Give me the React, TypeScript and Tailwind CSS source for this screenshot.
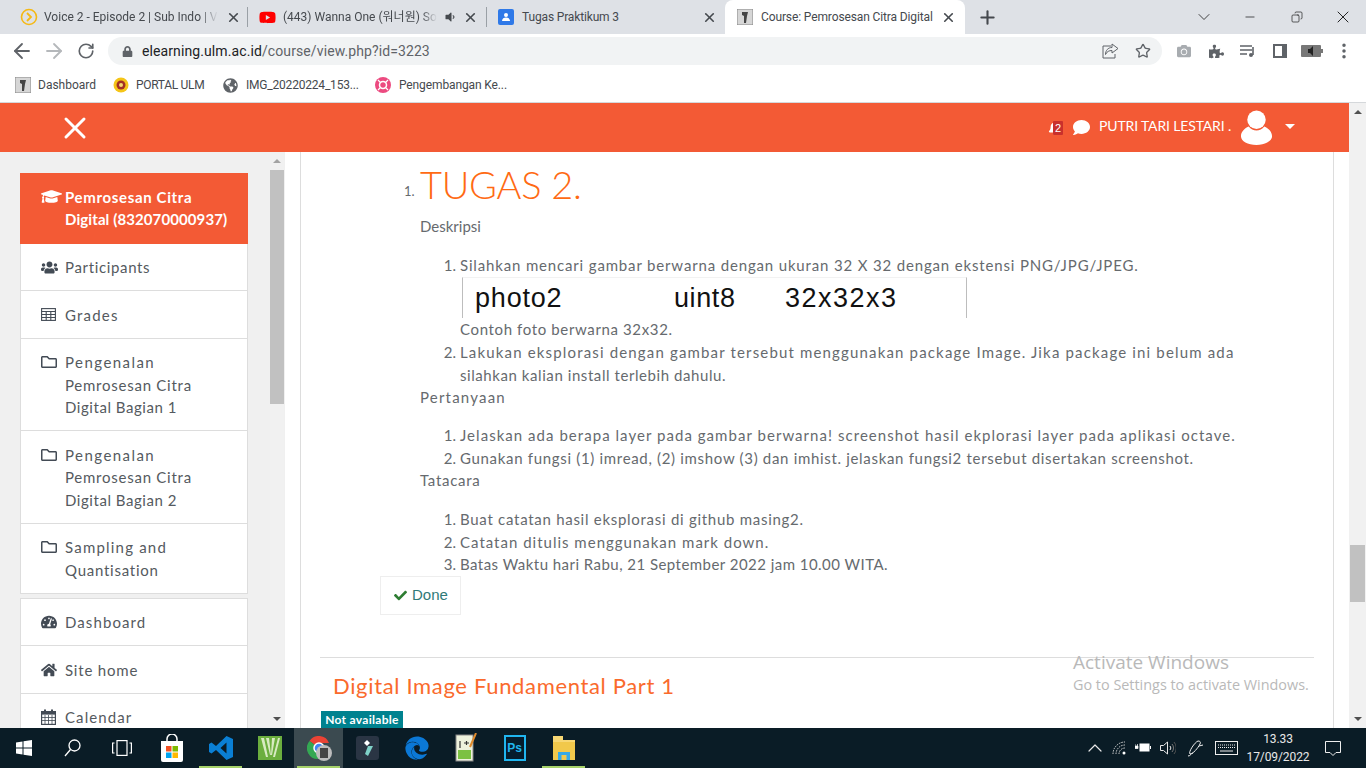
import React from "react";
import { ArrowLeft, ArrowRight, RotateCw, X, Plus, Minus, ChevronDown, Star, ChevronUp, MoreVertical, Copy } from "lucide-react";
import { FaGraduationCap, FaUsers, FaRegFolder, FaTachometerAlt, FaHome, FaBell, FaComment, FaCheck, FaYoutube, FaGlobeAmericas, FaLock, FaVolumeDown, FaPuzzlePiece, FaCamera, FaEdge } from "react-icons/fa";

const Favicon = () => (
  <svg width="16" height="16" viewBox="0 0 16 16" className="shrink-0"><rect width="16" height="16" fill="#d6d6d6" /><path d="M0 0h16v16H0z" fill="none" stroke="#888" /><path d="M5 3h6l-1 4-1 7H7V7L5 6z" fill="#444" /></svg>
);

const Close = () => <X size={15} strokeWidth={2.600} className="text-[#45494e] shrink-0 ml-auto -mx-[1px]" />;

const TableIcon = () => (
  <svg width="15" height="13" viewBox="0 0 15 13" fill="none" stroke="#434b55" strokeWidth="1.100"><rect x="0.600" y="0.600" width="13.800" height="11.800" /><path d="M0.600 3.500h13.800M0.600 6.500h13.800M0.600 9.500h13.800M5.200 3.500v9M9.800 3.500v9" /></svg>
);

const CalendarIcon = () => (
  <svg width="15" height="16" viewBox="0 0 15 16"><rect x="0.600" y="2.600" width="13.800" height="12.800" fill="none" stroke="#434b55" strokeWidth="1.200" /><rect x="0.600" y="2.600" width="13.800" height="3" fill="#434b55" /><path d="M0.600 8.500h13.800M0.600 11.500h13.800M4 6v9M7.500 6v9M11 6v9" stroke="#434b55" strokeWidth="0.800" /><path d="M4 0.500v3M11 0.500v3" stroke="#434b55" strokeWidth="2" /></svg>
);

const L = ({ t, children }: { t: string; children: React.ReactNode }) => <span className={`block ${t}`}>{children}</span>;

const Item = ({ icon, children }: { icon: React.ReactNode; children: React.ReactNode }) => (
  <div className="flex pl-[20px] pt-[12.500px] pb-[11.500px] border-b border-[#dddddd]">
    <span className="w-[24px] h-[22px] flex items-center text-[#434b55] shrink-0">{icon}</span>
    <span className="leading-[22.500px] text-[15px] text-[#555a60] whitespace-nowrap">{children}</span>
  </div>
);

const Body = ({ children, className = "" }: { children: React.ReactNode; className?: string }) => (
  <div className={`leading-[22.500px] h-[22.500px] whitespace-nowrap ${className}`}>{children}</div>
);

const Li = ({ n, children, className = "" }: { n: number; children: React.ReactNode; className?: string }) => (
  <div className={`flex ${className}`}>
    <span className="w-[40px] text-right pr-[4px] shrink-0 tracking-normal leading-[22.500px]">{n}.</span>
    <div className="whitespace-nowrap leading-[22.500px]">{children}</div>
  </div>
);

const TaskIcon = ({ children, active, lit }: { children: React.ReactNode; active?: boolean; lit?: boolean }) => (
  <div className={`w-[49px] h-full relative flex items-center justify-center ${active ? "bg-[#3b4a50]" : ""}`}>
    {children}
    {lit ? <span className="absolute bottom-0 left-[3px] right-[3px] h-[2px] bg-[#a6d26a]" /> : null}
  </div>
);

const Tool = ({ children }: { children: React.ReactNode }) => (
  <div className="w-[32px] h-full flex items-center justify-center shrink-0">{children}</div>
);

export default function App() {
  return (
    <div className="w-[1366px] h-[768px] overflow-hidden flex flex-col bg-white [font-family:Lato,'Noto_Sans_CJK_KR',sans-serif]">
      {/* Tab strip */}
      <div className="h-[34px] bg-[#dee1e6] flex items-center shrink-0 pl-[20px] [font-family:Roboto,'Noto_Sans_CJK_KR',sans-serif]">
        <div className="flex items-center h-full w-[220px]">
          <svg width="18" height="18" viewBox="0 0 18 18" className="shrink-0"><circle cx="9" cy="9" r="7.500" fill="none" stroke="#f5b915" strokeWidth="1.600" /><path d="M7 5l4 4-4 4" fill="none" stroke="#f5b915" strokeWidth="1.800" /></svg>
          <span className="ml-[6px] w-[174px] overflow-hidden whitespace-nowrap text-[12px] text-[#45494e] [mask-image:linear-gradient(to_right,black_90%,transparent)]">Voice 2 - Episode 2 | Sub Indo | V</span>
          <Close />
        </div>
        <span className="w-px h-[20px] bg-[#9aa0a6] ml-[7px] mr-[11px]" />
        <div className="flex items-center h-full w-[218px]">
          <FaYoutube size={17} className="text-[#ff0000] shrink-0" />
          <span className="ml-[7px] w-[154px] overflow-hidden whitespace-nowrap text-[12px] text-[#45494e] [mask-image:linear-gradient(to_right,black_90%,transparent)]">(443) Wanna One (워너원) So</span>
          <FaVolumeDown size={12} className="text-[#45494e] ml-[7px]" />
          <Close />
        </div>
        <span className="w-px h-[20px] bg-[#9aa0a6] ml-[9px] mr-[11px]" />
        <div className="flex items-center h-full w-[218px]">
          <svg width="16" height="16" viewBox="0 0 16 16" className="shrink-0"><rect width="16" height="16" rx="2" fill="#2f79e8" /><circle cx="8" cy="6" r="2" fill="#fff" /><path d="M4 12c0-2.500 2-3.500 4-3.500s4 1 4 3.500z" fill="#fff" /></svg>
          <span className="ml-[8px] whitespace-nowrap text-[12px] text-[#45494e] tracking-[-0.15px]">Tugas Praktikum 3</span>
          <Close />
        </div>
        <div className="ml-[9px] w-[240px] h-full bg-white rounded-t-[8px] flex items-center pl-[12px] pr-[10px] self-end">
          <Favicon />
          <span className="ml-[8px] whitespace-nowrap text-[12px] text-[#45494e] tracking-[-0.12px]">Course: Pemrosesan Citra Digital</span>
          <Close />
        </div>
        <Plus size={21} strokeWidth={2.400} className="text-[#45494e] ml-[12px]" />
        <div className="ml-auto flex items-center h-full">
          <ChevronDown size={20} strokeWidth={1.100} className="text-[#333] mr-[29px]" />
          <Minus size={14} strokeWidth={1.200} className="text-[#111] mr-[34px]" />
          <Copy size={12} strokeWidth={1.300} className="text-[#111] mr-[30px] -scale-x-100" />
          <X size={20} strokeWidth={1.100} className="text-[#111] mr-[13px]" />
        </div>
      </div>
      {/* Toolbar */}
      <div className="h-[34px] bg-white flex items-center shrink-0 pl-[6px]">
        <Tool><ArrowLeft size={24} strokeWidth={1.800} className="text-[#5f6368]" /></Tool>
        <Tool><ArrowRight size={24} strokeWidth={1.800} className="text-[#b5b8bb]" /></Tool>
        <Tool><RotateCw size={18} strokeWidth={2.200} className="text-[#5f6368]" /></Tool>
        <div className="ml-[6px] w-[1054px] h-[28px] rounded-full bg-[#f1f3f4] flex items-center pl-[14px] pr-[10px] shrink-0">
          <FaLock size={11} className="text-[#5f6368]" />
          <span className="ml-[9px] pt-[1px] text-[14px] text-[#202124] [font-family:Roboto,sans-serif] tracking-[0.1px]">elearning.ulm.ac.id<span className="text-[#5f6368]">/course/view.php?id=3223</span></span>
          <svg width="17" height="16" viewBox="0 0 17 16" fill="none" stroke="#5f6368" strokeWidth="1" className="ml-auto mr-[16px]"><path d="M9 3H1v12h12v-4" /><path d="M10 1l6 4.500-6 4.500V7.500c-3 0-5 1-6.500 4 0-4 2.500-7 6.500-7z" /></svg>
          <Star size={16} strokeWidth={2} className="text-[#5f6368] mr-[1px]" />
        </div>
        <div className="ml-[6px] flex h-full">
          <Tool><FaCamera size={14} className="text-[#a8acb0]" /></Tool>
          <Tool><FaPuzzlePiece size={15} className="text-[#5f6368]" /></Tool>
          <Tool><svg width="16" height="14" viewBox="0 0 16 14"><path d="M0 2h12M0 6h12M0 10h7" stroke="#5f6368" strokeWidth="1.500" /><path d="M13 3v8" stroke="#5f6368" strokeWidth="1.600" /><circle cx="11" cy="11" r="2" fill="#5f6368" /></svg></Tool>
          <Tool><svg width="14" height="14" viewBox="0 0 14 14"><path d="M0 0h14v14H0z" fill="#5f6368" /><path d="M2 2h7v10H2z" fill="#fff" /></svg></Tool>
          <Tool><svg width="22" height="12" viewBox="0 0 22 12"><rect width="20" height="12" rx="1" fill="#777" /><path d="M7 4h2l3-3v10L9 8H7z" fill="#222" /><rect x="20" y="4" width="2" height="4" fill="#777" /></svg></Tool>
          <Tool><MoreVertical size={20} strokeWidth={2.200} className="text-[#5f6368]" /></Tool>
        </div>
      </div>
      {/* Bookmarks */}
      <div className="h-[34px] bg-white flex items-center shrink-0 pl-[15px] text-[12px] text-[#45494e] [font-family:Roboto,sans-serif]">
        <Favicon />
        <span className="ml-[7px] w-[58px] whitespace-nowrap">Dashboard</span>
        <svg width="16" height="16" viewBox="0 0 16 16" className="ml-[17px]"><circle cx="8" cy="8" r="7.500" fill="#f5c518" /><circle cx="8" cy="8" r="4.500" fill="#a32f24" /><circle cx="8" cy="8" r="2" fill="#f5d76e" /></svg>
        <span className="ml-[7px] w-[69px] whitespace-nowrap tracking-[-0.3px]">PORTAL ULM</span>
        <FaGlobeAmericas size={15} className="text-[#5f6368] ml-[18px]" />
        <span className="ml-[8px] w-[112px] whitespace-nowrap tracking-[-0.2px]">IMG_20220224_153...</span>
        <svg width="16" height="16" viewBox="0 0 16 16" className="ml-[17px]"><circle cx="8" cy="8" r="8" fill="#ec4a80" /><circle cx="8" cy="8" r="3.500" fill="none" stroke="#fff" strokeWidth="1.500" /><path d="M3 3l3 3M13 3l-3 3M3 13l3-3M13 13l-3-3" stroke="#fff" strokeWidth="1.200" /></svg>
        <span className="ml-[8px] whitespace-nowrap tracking-[-0.12px]">Pengembangan Ke...</span>
      </div>
      <div className="h-px bg-[#d5d8db] shrink-0" />

      {/* Page */}
      <div className="flex h-[625px] shrink-0 relative">
        <div className="w-[1349px] flex flex-col">
          {/* Orange bar */}
          <div className="h-[49px] bg-[#f35a35] flex items-center shrink-0 pl-[56.500px] text-white">
            <X size={36} strokeWidth={2} />
            <div className="ml-auto flex items-center pr-[54px]">
              <span className="relative w-[16px] h-[16px] flex items-center">
                <FaBell size={14} />
                <span className="absolute left-[5px] top-[1px] w-[10px] h-[14px] bg-[#c9302c] rounded-[1px] text-[11px] leading-[14px] text-center [font-family:'Liberation_Sans',sans-serif]">2</span>
              </span>
              <FaComment size={17} className="ml-[9px]" />
              <span className="ml-[9px] w-[133px] text-[14px] tracking-[-0.15px] whitespace-nowrap mb-[5px]">PUTRI TARI LESTARI .</span>
              <svg width="33" height="35" viewBox="0 0 34 36" className="ml-[8px]"><circle cx="17" cy="10" r="9.500" fill="#fff" /><path d="M9 17c-5 2-8 6-8 10 0 5 7 9 16 9s16-4 16-9c0-4-3-8-8-10-2 3-5 4-8 4s-6-1-8-4z" fill="#fff" /></svg>
              <span className="ml-[12px] mb-[3px] w-0 h-0 border-l-[5px] border-r-[5px] border-t-[5px] border-l-transparent border-r-transparent border-t-white" />
            </div>
          </div>
          {/* Below bar */}
          <div className="flex flex-1 min-h-0">
            {/* Sidebar pane */}
            <div className="w-[285px] bg-[#f0f0f0] flex shrink-0 overflow-hidden">
              <div className="w-[270px] pl-[20px] pt-[21px] overflow-hidden">
                <div className="w-[228px] border-x border-[#dddddd] bg-white">
                  <div className="-mx-px bg-[#f35a35] text-white flex pl-[21px] pt-[12.500px] h-[70.500px]">
                    <span className="w-[24px] h-[22px] flex items-center shrink-0"><FaGraduationCap size={21} /></span>
                    <span className="font-bold leading-[22.500px] text-[15px] whitespace-nowrap">
                      <L t="tracking-[0.65px]">Pemrosesan Citra</L>
                      <L t="tracking-[0.1px]">Digital (832070000937)</L>
                    </span>
                  </div>
                  <Item icon={<FaUsers size={17} />}><L t="tracking-[0.65px]">Participants</L></Item>
                  <Item icon={<TableIcon />}><L t="tracking-[1.200px]">Grades</L></Item>
                  <Item icon={<FaRegFolder size={16} />}>
                    <L t="tracking-[1.450px]">Pengenalan</L>
                    <L t="tracking-[0.75px]">Pemrosesan Citra</L>
                    <L t="tracking-[0.55px]">Digital Bagian 1</L>
                  </Item>
                  <Item icon={<FaRegFolder size={16} />}>
                    <L t="tracking-[1.450px]">Pengenalan</L>
                    <L t="tracking-[0.75px]">Pemrosesan Citra</L>
                    <L t="tracking-[0.55px]">Digital Bagian 2</L>
                  </Item>
                  <Item icon={<FaRegFolder size={16} />}>
                    <L t="tracking-[1.200px]">Sampling and</L>
                    <L t="tracking-[0.75px]">Quantisation</L>
                  </Item>
                </div>
                <div className="w-[228px] mt-[4px] border-x border-t border-[#dddddd] bg-white">
                  <Item icon={<FaTachometerAlt size={16} />}><L t="tracking-[1.100px]">Dashboard</L></Item>
                  <Item icon={<FaHome size={16} />}><L t="tracking-[0.8px]">Site home</L></Item>
                  <Item icon={<CalendarIcon />}><L t="tracking-[1.100px]">Calendar</L></Item>
                </div>
              </div>
              <div className="w-[14px] bg-[#f1f1f1] flex flex-col items-center shrink-0">
                <div className="h-[18px] flex items-center"><span className="w-0 h-0 border-l-[4px] border-r-[4px] border-b-[4px] border-l-transparent border-r-transparent border-b-[#a3a3a3]" /></div>
                <div className="w-[14px] h-[234px] bg-[#c1c1c1]" />
                <span className="mt-auto mb-[7px] w-0 h-0 border-l-[4px] border-r-[4px] border-t-[4px] border-l-transparent border-r-transparent border-t-[#505050]" />
              </div>
            </div>
            {/* Content */}
            <div className="flex-1 bg-white pl-[15px] pr-[15px] min-w-0">
              <div className="h-full border-x border-[#dddddd] relative overflow-hidden text-[15px] text-[#666a6e]">
                <div className="flex items-end h-[57px] pl-[103px]">
                  <span className="text-[13px] w-[16px] mb-[8px]">1.</span>
                  <span className="text-[38px] leading-[44px] font-light text-[#ff6a13] tracking-[-0.3px] whitespace-nowrap mb-[3px]">TUGAS 2.</span>
                </div>
                <div className="pl-[119px]">
                  <div className="h-[6px]" />
                  <Body>Deskripsi</Body>
                  <div className="pt-[16.500px]">
                    <Li n={1}>
                      <L t="tracking-[0.84px]">Silahkan mencari gambar berwarna dengan ukuran 32 X 32 dengan ekstensi PNG/JPG/JPEG.</L>
                      <div className="ml-[2px] w-[505px] h-[41px] bg-white border-x border-[#bdbdbd] border-t border-t-[#f2f2f2] flex items-center pl-[12px] pt-[1px] text-[27px] leading-none text-[#111] [font-family:'Liberation_Sans',sans-serif]">
                        <span className="w-[199px] tracking-[0.8px]">photo2</span><span className="w-[111px] tracking-[0.6px]">uint8</span><span className="tracking-[1.500px]">32x32x3</span>
                      </div>
                      <L t="tracking-[0.63px]">Contoh foto berwarna 32x32.</L>
                    </Li>
                    <Li n={2} className="mt-[1px]">
                      <L t="tracking-[1.160px]">Lakukan eksplorasi dengan gambar tersebut menggunakan package Image. Jika package ini belum ada</L>
                      <L t="tracking-[0.57px]">silahkan kalian install terlebih dahulu.</L>
                    </Li>
                  </div>
                  <Body className="tracking-[1.200px]">Pertanyaan</Body>
                  <div className="pt-[15.500px]">
                    <Li n={1}><L t="tracking-[1.040px]">Jelaskan ada berapa layer pada gambar berwarna! screenshot hasil ekplorasi layer pada aplikasi octave.</L></Li>
                    <Li n={2}><L t="tracking-[0.68px]">Gunakan fungsi (1) imread, (2) imshow (3) dan imhist. jelaskan fungsi2 tersebut disertakan screenshot.</L></Li>
                  </div>
                  <Body className="tracking-[0.7px]">Tatacara</Body>
                  <div className="pt-[16.500px]">
                    <Li n={1}><L t="tracking-[0.72px]">Buat catatan hasil eksplorasi di github masing2.</L></Li>
                    <Li n={2}><L t="tracking-[1px]">Catatan ditulis menggunakan mark down.</L></Li>
                    <Li n={3}><L t="tracking-[0.46px]">Batas Waktu hari Rabu, 21 September 2022 jam 10.00 WITA.</L></Li>
                  </div>
                </div>
                <div className="ml-[79px] w-[81px] h-[39px] border border-[#eeeeee] flex items-center pl-[13px] text-[#2f7a78] [font-family:'Liberation_Sans',sans-serif]">
                  <FaCheck size={13} className="text-[#2e7d32]" />
                  <span className="ml-[5px]">Done</span>
                </div>
                <div className="mt-[42px] ml-[19px] mr-[19px] h-px bg-[#dddddd]" />
                <div className="mt-[15px] ml-[32px] text-[22px] leading-[26px] text-[#fa6a2c] tracking-[0.66px] whitespace-nowrap">Digital Image Fundamental Part 1</div>
                <div className="mt-[12px] ml-[20px] w-[82px] h-[20px] bg-[#00828f] text-white text-[12px] font-bold leading-[18px] text-center tracking-[0.3px]">Not available</div>
              </div>
            </div>
          </div>
        </div>
        {/* Page scrollbar */}
        <div className="w-[17px] bg-[#f1f1f1] flex flex-col items-center shrink-0">
          <div className="h-[17px] flex items-center"><span className="w-0 h-0 border-l-[4px] border-r-[4px] border-b-[4px] border-l-transparent border-r-transparent border-b-[#505050]" /></div>
          <div className="w-[15px] h-[57px] mt-[425px] bg-[#c1c1c1]" />
          <span className="mt-auto mb-[7px] w-0 h-0 border-l-[4px] border-r-[4px] border-t-[4px] border-l-transparent border-r-transparent border-t-[#505050]" />
        </div>
        {/* Watermark */}
        <div className="absolute left-[1073px] top-[547px] text-[#b9b9b9] [font-family:'Open_Sans',sans-serif] whitespace-nowrap pointer-events-none">
          <div className="text-[19px] leading-[24px]">Activate Windows</div>
          <div className="text-[14.400px] leading-[20px] mt-[1px]">Go to Settings to activate Windows.</div>
        </div>
      </div>

      {/* Taskbar */}
      <div className="flex-1 bg-[#0a1c26] flex items-center text-white relative">
        <div className="w-[48px] h-full flex items-center justify-center">
          <svg width="16" height="16" viewBox="0 0 16 16"><path d="M0 2.500l6.500-1V7.500H0zM7.500 1.300L16 0v7.500H7.500zM0 8.500h6.500v6L0 13.500zM7.500 8.500H16V16l-8.500-1.300z" fill="#fff" /></svg>
        </div>
        <div className="w-[48px] h-full flex items-center justify-center">
          <svg width="17" height="18" viewBox="0 0 17 18" fill="none" stroke="#fff" strokeWidth="1.300"><circle cx="10.500" cy="6.500" r="5.500" /><path d="M6.500 10.500L1 17" /></svg>
        </div>
        <div className="w-[51px] h-full flex items-center justify-center">
          <svg width="20" height="16" viewBox="0 0 20 16" fill="none" stroke="#fff" strokeWidth="1.200"><rect x="5" y="0.600" width="10" height="14.800" /><path d="M2.500 3H0.600v10h1.900M17.500 3h1.900v10h-1.900" /></svg>
        </div>
        <TaskIcon>
          <svg width="24" height="28" viewBox="0 0 24 28"><path d="M7 8V5a5 5 0 0110 0v3" fill="none" stroke="#fff" strokeWidth="1.500" /><path d="M1 7h22v19a2 2 0 01-2 2H3a2 2 0 01-2-2z" fill="#fff" /><rect x="6" y="12" width="5.500" height="5.500" fill="#f25022" /><rect x="12.500" y="12" width="5.500" height="5.500" fill="#7fba00" /><rect x="6" y="18.500" width="5.500" height="5.500" fill="#00a4ef" /><rect x="12.500" y="18.500" width="5.500" height="5.500" fill="#ffb900" /></svg>
        </TaskIcon>
        <TaskIcon lit>
          <svg width="24" height="24" viewBox="0 0 24 24"><path d="M17.500 0L24 3v18l-6.500 3L7 14l-4.500 3.500L0 16V8l2.500-1.500L7 10zM17.500 6.500L11.500 12l6 5.500z" fill="#0a7fd4" fillRule="evenodd" /></svg>
        </TaskIcon>
        <TaskIcon>
          <svg width="24" height="24" viewBox="0 0 24 24"><rect width="24" height="24" fill="#6cae3e" /><path d="M3 2l5 19h2L6 2zM8 2l4 17 1 0L11 2zM14 2l-1 17 1 0 3-17zM20 2l-5 19h2L22 2z" fill="#d8eac2" /></svg>
        </TaskIcon>
        <TaskIcon active lit>
          <span className="relative w-[24px] h-[24px] flex">
            <svg width="24" height="24" viewBox="0 0 24 24"><path d="M12 12L2.500 5A11 11 0 0122 7H12z" fill="#ea4335" /><path d="M12 12H23A11 11 0 0112 23z" fill="#fbbc04" /><path d="M12 23A11 11 0 012.500 5L12 12z" fill="#34a853" /><circle cx="12" cy="12" r="5" fill="#4285f4" stroke="#fff" strokeWidth="1.500" /></svg>
            <span className="absolute left-[9px] top-[9px] w-[16px] h-[16px] rounded-full bg-[#bdbdbd] flex items-center justify-center"><span className="w-[8px] h-[10px] bg-[#444]" /></span>
          </span>
        </TaskIcon>
        <TaskIcon>
          <svg width="23" height="24" viewBox="0 0 23 24"><rect width="23" height="24" rx="3" fill="#2a3544" /><path d="M11 4l3 3-3 3-3-3z" fill="#fff" /><path d="M12 10h5l-5 10-3-2z" fill="#7fd1c8" /></svg>
        </TaskIcon>
        <TaskIcon><FaEdge size={24} className="text-[#0b78d6]" /></TaskIcon>
        <TaskIcon>
          <svg width="24" height="30" viewBox="0 0 24 30"><rect x="2" y="2" width="17" height="26" fill="#eef2dd" stroke="#888" /><rect x="4" y="17" width="13" height="9" fill="#7cc142" /><path d="M6 8v7M10 10h5M12.500 8v4" stroke="#333" strokeWidth="1.200" /><path d="M22 0l-6 14" stroke="#e08a2c" strokeWidth="2" /></svg>
        </TaskIcon>
        <TaskIcon>
          <span className="w-[22px] h-[26px] border-2 border-[#20b6f0] bg-[#061c2c] text-[#20b6f0] text-[12px] font-bold leading-[22px] text-center [font-family:'Liberation_Sans',sans-serif]">Ps</span>
        </TaskIcon>
        <TaskIcon lit>
          <svg width="22" height="24" viewBox="0 0 22 24"><path d="M0 0h10v4h12v20H0z" fill="#f7d774" /><path d="M0 6h22v18H0z" fill="#f1c84b" /><path d="M5 24v-8h12v8z" fill="#35a9e6" /><rect x="8.500" y="19" width="5" height="5" fill="#f1c84b" /></svg>
        </TaskIcon>
        <div className="ml-auto flex items-center h-full text-[#e8e8e8]">
          <ChevronUp size={24} strokeWidth={1.200} />
          <svg width="14" height="14" viewBox="0 0 14 14" fill="none" stroke="#d8d8d8" strokeWidth="1" className="ml-[5px]"><path d="M1 13A12 12 0 0113 1M4 13A9 9 0 0113 4M7 13a6 6 0 016-6" strokeDasharray="1.500 1" /><circle cx="12" cy="12" r="1.500" fill="#fff" stroke="none" /></svg>
          <svg width="16" height="12" viewBox="0 0 16 12" className="ml-[9px]"><path d="M0 2v2.500M2.500 2v2.500M0 4h3v2.500H0z" stroke="#fff" fill="#fff" strokeWidth="0.700" /><rect x="4.500" y="1.500" width="10" height="8" fill="#fff" /><rect x="15" y="4" width="1" height="3" fill="#fff" /></svg>
          <svg width="16" height="14" viewBox="0 0 16 14" fill="none" stroke="#e8e8e8" strokeWidth="1" className="ml-[9px]"><path d="M0.500 4.500h3L7.500 1v12l-4-3.500h-3z" /><path d="M10 5a3 3 0 010 4" /><path d="M12 3a6 6 0 010 8" stroke="#777" /><path d="M14 1a9 9 0 010 12" stroke="#555" /></svg>
          <svg width="17" height="18" viewBox="0 0 17 18" fill="none" stroke="#eee" strokeWidth="1" className="ml-[11px]"><path d="M3 15c-2-2 5-12 8-13 2 0 3 1 2 3-2 4-7 10-10 10zM1 17c3 0 3-3 5-3M12 7l4-1" /></svg>
          <svg width="23" height="14" viewBox="0 0 23 14" fill="none" stroke="#eee" strokeWidth="1" className="ml-[11px]"><rect x="0.500" y="0.500" width="22" height="13" /><path d="M3 4h17M3 6.500h17" strokeDasharray="1 1" /><path d="M5 10h13" /></svg>
          <div className="w-[80px] text-center text-[12px] leading-[18px] tracking-[-0.1px] [font-family:Roboto,sans-serif] whitespace-nowrap">13.33<br />17/09/2022</div>
          <svg width="16" height="15" viewBox="0 0 16 15" fill="none" stroke="#eee" strokeWidth="1" className="ml-[7px] mr-[25px]"><path d="M0.500 0.500h15v11H11l-3 3-3-3H0.500z" /></svg>
        </div>
      </div>
    </div>
  );
}
